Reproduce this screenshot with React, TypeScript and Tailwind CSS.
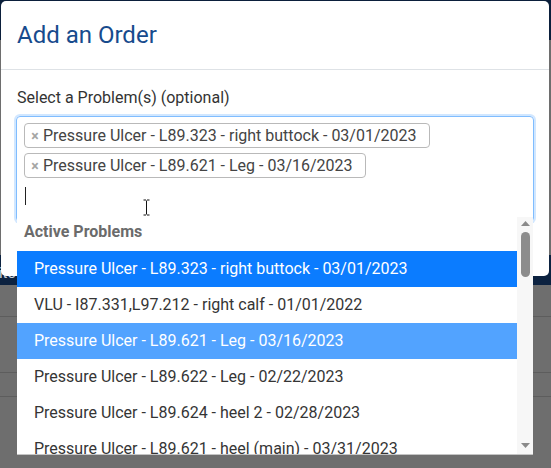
import React from "react";

const options = [
  { text: "Pressure Ulcer - L89.323 - right buttock - 03/01/2023", state: "hl" },
  { text: "VLU - I87.331,L97.212 - right calf - 01/01/2022", state: "" },
  { text: "Pressure Ulcer - L89.621 - Leg - 03/16/2023", state: "sel" },
  { text: "Pressure Ulcer - L89.622 - Leg - 02/22/2023", state: "" },
  { text: "Pressure Ulcer - L89.624 - heel 2 - 02/28/2023", state: "" },
  { text: "Pressure Ulcer - L89.621 - heel (main) - 03/31/2023", state: "" },
];

function Tag({ text }: { text: string }) {
  return (
    <div className="flex h-[25px] items-center self-start rounded-[4px] border border-[#b9b9b9] bg-white pl-[6px] pr-[12px] text-[16px] leading-[22px] text-[#444]">
      <span className="mr-[4px] w-[8px] text-center text-[14px] font-bold leading-none text-[#a5a5a5]">×</span>
      <span>{text}</span>
    </div>
  );
}

export default function App() {
  return (
    <div className="relative h-[468px] w-[551px] overflow-hidden bg-[#6e6e6e] font-['Roboto',sans-serif]">
      {/* dimmed page behind */}
      <div className="flex flex-col">
        <div className="h-[40px] bg-[#0b1f3b]" />
        <div className="h-[215px]" />
        <div className="flex h-[30px] items-center bg-[#0c2240] text-[15px] text-[#c9d1dc]">
          <span className="-ml-[10px] pt-[6px]">Site</span>
        </div>
        <div className="h-[32px] border-b border-[#5d5d5d]" />
        <div className="h-[56px] border-b border-[#5d5d5d]" />
        <div className="h-[24px] border-b border-[#5d5d5d]" />
      </div>

      {/* modal */}
      <div className="absolute left-px top-px h-[275px] w-[548px] overflow-hidden rounded-[5px] bg-white">
        <div className="border-b border-[#dee2e6] px-[15px] py-4">
          <h5 className="pl-px text-[24px] leading-[36px] text-[#174b8d]">Add an Order</h5>
        </div>
        <div className="px-[15px] pt-4">
          <label className="block pl-px text-[16px] leading-[24px] text-[#333]">Select a Problem(s) (optional)</label>
          <div className="mt-[6px] flex h-[106px] flex-col gap-[5px] rounded-[4px] border border-[#80bdff] pl-[7px] pt-[6px] shadow-[0_0_0_2px_rgba(0,123,255,0.18)]">
            <Tag text="Pressure Ulcer - L89.323 - right buttock - 03/01/2023" />
            <Tag text="Pressure Ulcer - L89.621 - Leg - 03/16/2023" />
            <div className="ml-px mt-[4px] h-[18px] w-px bg-[#222]" />
          </div>
        </div>
      </div>

      {/* dropdown */}
      <div className="absolute left-[17px] top-[217px] flex h-[238px] w-[516px] overflow-hidden border-b border-[#c4c4c4] bg-white">
        <div className="flex w-[500px] flex-col">
          <div className="h-[34px] shrink-0 pl-[7px] pt-[3px] text-[16px] font-bold leading-[24px] text-[#6b6b6b]">
            Active Problems
          </div>
          {options.map((o, i) => (
            <div
              key={i}
              className={
                "flex h-[36px] shrink-0 items-center pl-[17px] text-[16px] leading-[24px] " +
                (o.state === "hl"
                  ? "bg-[#0b7cff] text-white"
                  : o.state === "sel"
                  ? "bg-[#52a3ff] text-white"
                  : "text-[#353535]")
              }
            >
              {o.text}
            </div>
          ))}
        </div>
        <div className="flex w-[16px] flex-col items-center bg-[#f7f7f7]">
          <svg width="9" height="5" viewBox="0 0 9 5" className="mt-[4px]">
            <path d="M0 5 L4.5 0 L9 5 Z" fill="#8a8a8a" />
          </svg>
          <div className="mt-[6px] h-[45px] w-[9px] rounded-full bg-[#8c8c8c]" />
          <div className="flex-1" />
          <svg width="9" height="5" viewBox="0 0 9 5" className="mb-[6px]">
            <path d="M0 0 L9 0 L4.5 5 Z" fill="#8a8a8a" />
          </svg>
        </div>
      </div>

      {/* mouse I-beam cursor */}
      <svg className="absolute left-[142px] top-[199px]" width="9" height="17" viewBox="0 0 9 17">
        <path d="M1.5 1 H4 M5 1 H7.5 M4.5 1.5 V15.5 M1.5 16 H4 M5 16 H7.5" stroke="#fff" strokeWidth="2.2" fill="none" />
        <path d="M1.5 1 H4 M5 1 H7.5 M4.5 1.5 V15.5 M1.5 16 H4 M5 16 H7.5" stroke="#111" strokeWidth="1" fill="none" />
      </svg>
    </div>
  );
}
